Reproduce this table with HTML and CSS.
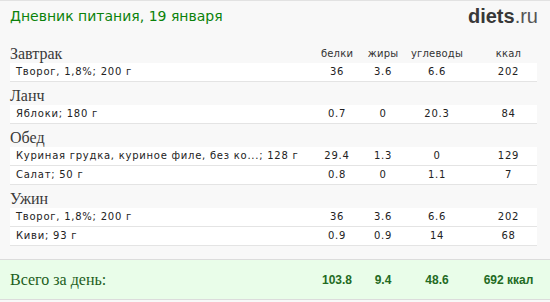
FILE: index.html
```html
<!DOCTYPE html>
<html lang="ru">
<head>
<meta charset="utf-8">
<title>Дневник питания</title>
<link rel="stylesheet" href="styles.css">
</head>
<body>
<div class="diary">
  <header class="top">
    <h1 class="title">Дневник питания, 19 января</h1>
    <div class="logo"><b>diets</b>.ru</div>
  </header>

  <section class="meal first">
    <div class="grid head">
      <div class="meal-name">Завтрак</div>
      <div class="col">белки</div>
      <div class="col">жиры</div>
      <div class="col">углеводы</div>
      <div class="col kcal">ккал</div>
    </div>
    <div class="grid row">
      <div class="food">Творог, 1,8%; 200 г</div>
      <div class="col">36</div><div class="col">3.6</div><div class="col">6.6</div><div class="col kcal">202</div>
    </div>
  </section>

  <section class="meal">
    <div class="meal-name">Ланч</div>
    <div class="grid row">
      <div class="food">Яблоки; 180 г</div>
      <div class="col">0.7</div><div class="col">0</div><div class="col">20.3</div><div class="col kcal">84</div>
    </div>
  </section>

  <section class="meal">
    <div class="meal-name">Обед</div>
    <div class="grid row">
      <div class="food">Куриная грудка, куриное филе, без ко...; 128 г</div>
      <div class="col">29.4</div><div class="col">1.3</div><div class="col">0</div><div class="col kcal">129</div>
    </div>
    <div class="grid row">
      <div class="food">Салат; 50 г</div>
      <div class="col">0.8</div><div class="col">0</div><div class="col">1.1</div><div class="col kcal">7</div>
    </div>
  </section>

  <section class="meal">
    <div class="meal-name">Ужин</div>
    <div class="grid row">
      <div class="food">Творог, 1,8%; 200 г</div>
      <div class="col">36</div><div class="col">3.6</div><div class="col">6.6</div><div class="col kcal">202</div>
    </div>
    <div class="grid row">
      <div class="food">Киви; 93 г</div>
      <div class="col">0.9</div><div class="col">0.9</div><div class="col">14</div><div class="col kcal">68</div>
    </div>
  </section>

  <footer class="grid total">
    <div class="total-label">Всего за день:</div>
    <div class="col">103.8</div>
    <div class="col">9.4</div>
    <div class="col">48.6</div>
    <div class="col kcal">692 ккал</div>
  </footer>
</div>
</body>
</html>
```

FILE: styles.css
```css
html, body {
  margin: 0;
  padding: 0;
  background: #f8f8f8;
}

.diary {
  width: 550px;
  height: 302px;
  box-sizing: border-box;
  border-top: 1px solid #e2e2e2;
  background: #f8f8f8;
  font-family: "DejaVu Sans", Verdana, sans-serif;
  color: #222;
  display: flex;
  flex-direction: column;
}

.top {
  height: 44px;
  display: flex;
  justify-content: space-between;
  align-items: flex-start;
  padding: 5px 12px 0 10px;
  box-sizing: border-box;
}

.title {
  margin: 0;
  font-family: "DejaVu Sans", Verdana, sans-serif;
  font-weight: normal;
  font-size: 14px;
  line-height: 20px;
  color: #0b820b;
}

.logo {
  font-family: "Liberation Sans", Arial, sans-serif;
  font-size: 20px;
  line-height: 22px;
  color: #555;
  margin-top: -1px;
}

.logo b {
  color: #383838;
}

.meal {
  padding: 0 13px 0 10px;
  margin-top: 5px;
}

.meal.first {
  margin-top: 0;
}

.grid {
  display: grid;
  grid-template-columns: 1fr 50px 42px 66px 67px;
  align-items: center;
}

.col {
  text-align: center;
}

.col.kcal {
  padding-left: 10px;
}

.meal-name {
  font-family: "Liberation Serif", Georgia, serif;
  font-size: 16px;
  line-height: 18px;
  color: #3a3a3a;
  height: 18px;
}

.head .col {
  font-family: "DejaVu Sans", Verdana, sans-serif;
  font-size: 10px;
  color: #333;
  line-height: 18px;
  letter-spacing: 0.2px;
}

.row {
  background: #fff;
  height: 19px;
  box-sizing: border-box;
  border-bottom: 1px solid #e4e4e4;
  font-size: 10px;
  letter-spacing: 0.75px;
  line-height: 18px;
}

.food {
  padding-left: 6px;
  white-space: nowrap;
}

.total {
  margin-top: auto;
  margin-bottom: 2px;
  height: 41px;
  box-sizing: border-box;
  background: #e9fde9;
  border-top: 1px solid #dcdcdc;
  border-bottom: 1px solid #dcdcdc;
  padding: 0 13px 0 10px;
}

.total-label {
  font-family: "Liberation Serif", Georgia, serif;
  font-size: 16px;
  color: #1c5e1c;
}

.total .col {
  font-family: "Liberation Sans", Arial, sans-serif;
  font-weight: bold;
  font-size: 12px;
  color: #236b23;
}
```
